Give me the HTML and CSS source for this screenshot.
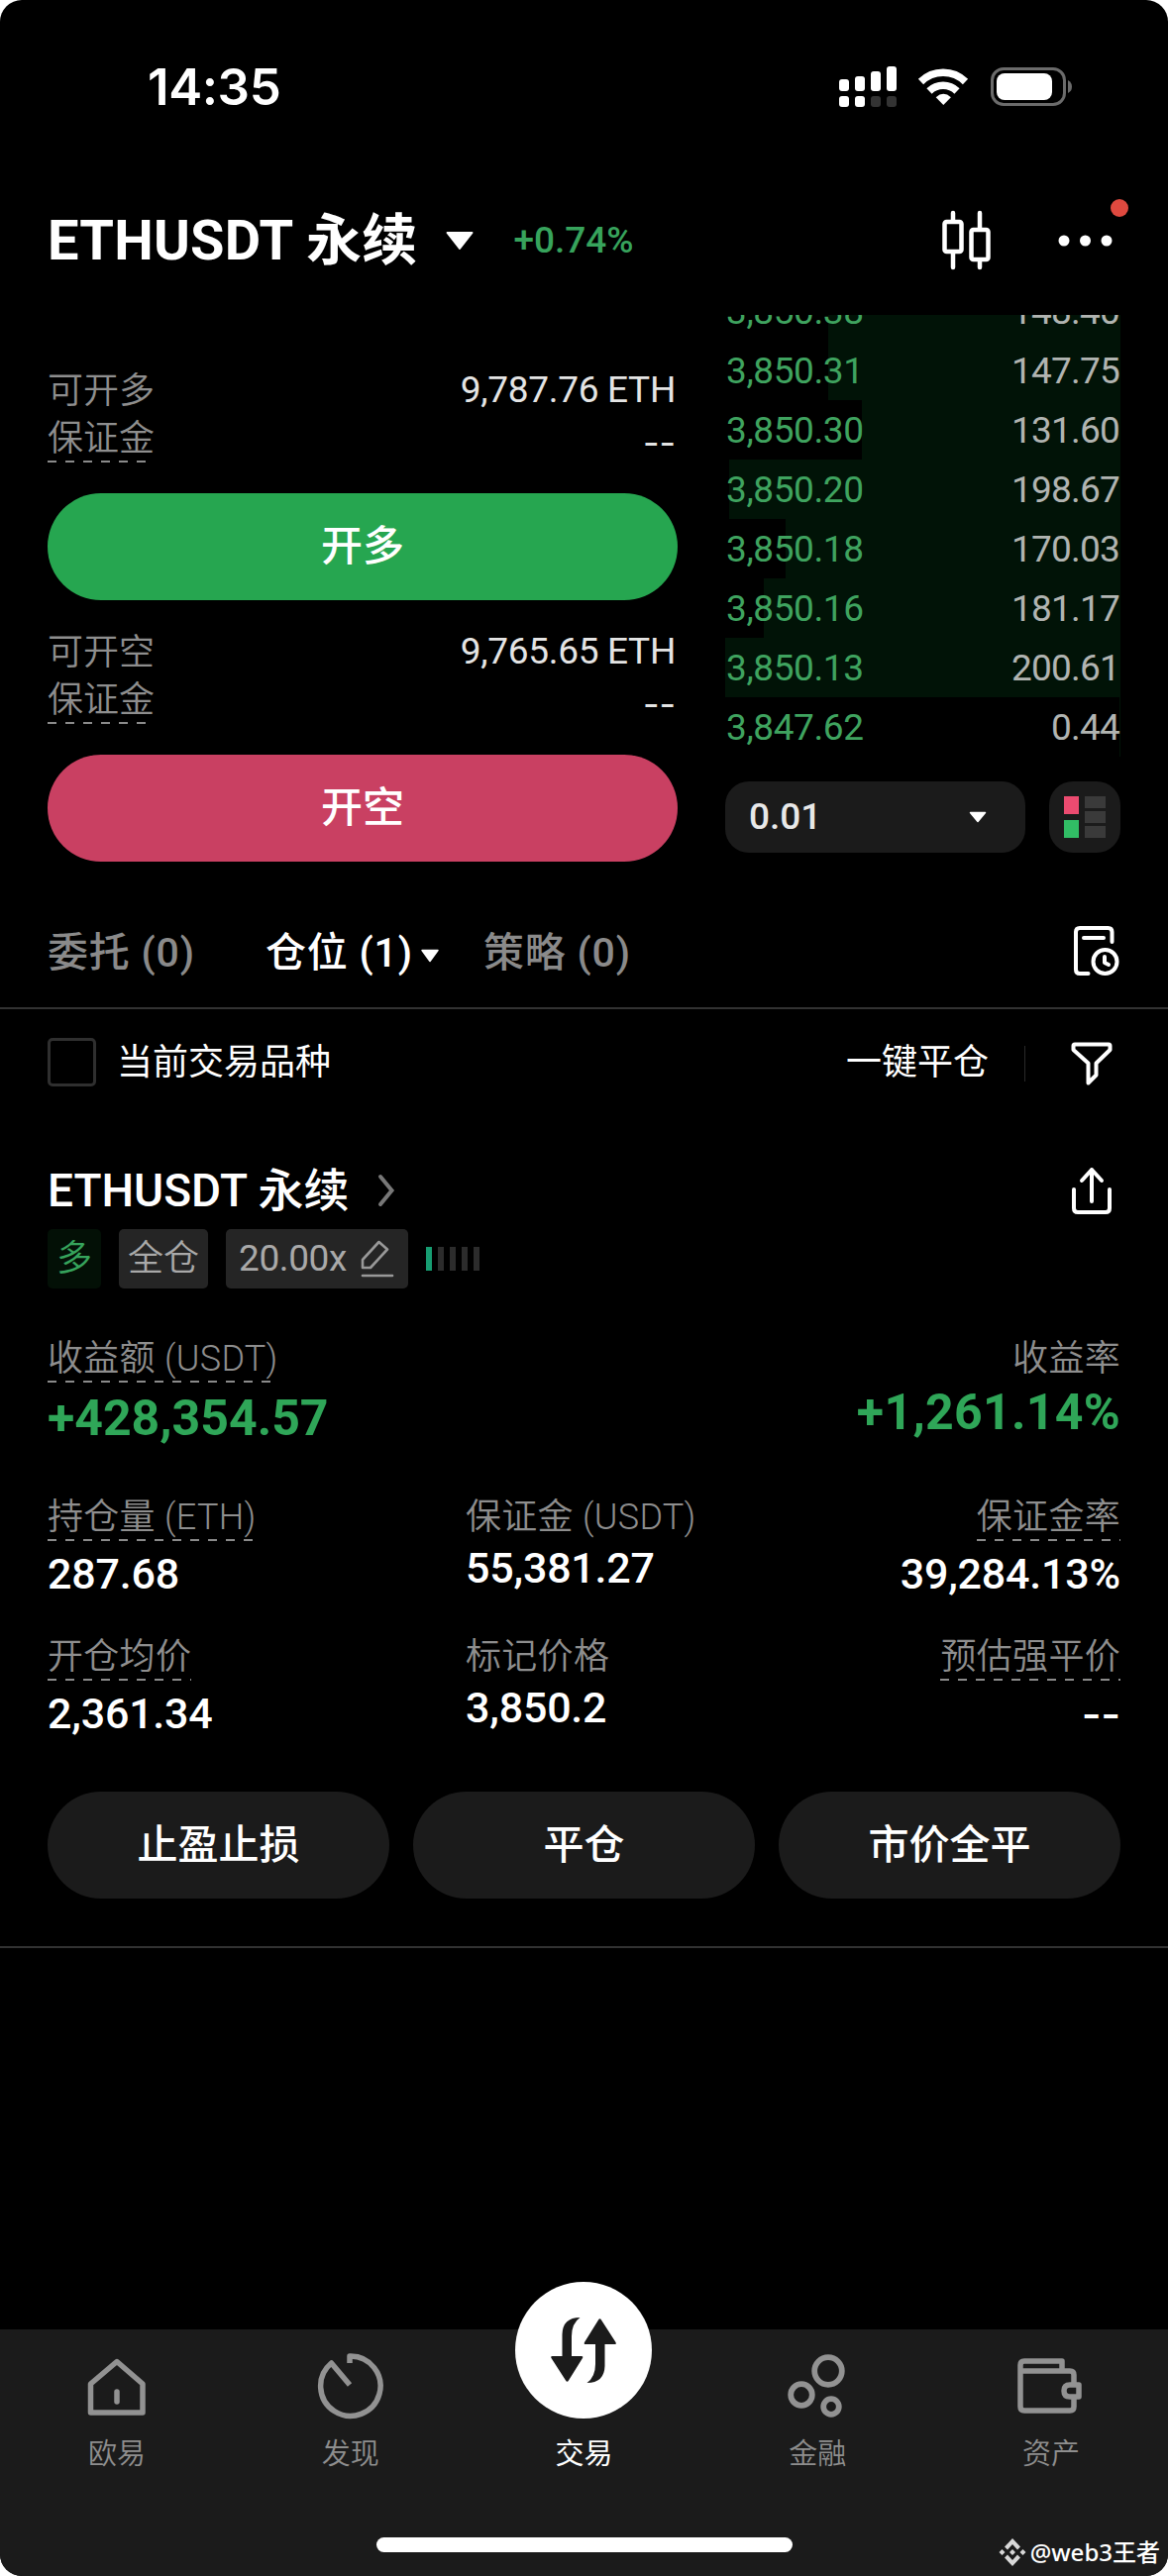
FILE: index.html
```html
<!DOCTYPE html>
<html lang="zh-CN">

<head>
    <meta charset="UTF-8">
    <title>ETHUSDT 永续</title>
    <link rel="stylesheet" href="styles.css">
</head>

<body>
    <div class="phone">
        <div class="status">
            <span class="time">14:35</span>
            <svg class="status-icons" width="240" height="48" viewBox="0 0 240 48" fill="#fff">
                <rect x="5" y="17" width="10" height="12" rx="3"/>
                <rect x="21" y="14" width="10" height="15" rx="3"/>
                <rect x="37" y="9" width="10" height="20" rx="3"/>
                <rect x="53" y="4" width="10" height="25" rx="3"/>
                <rect x="5" y="34" width="10" height="11" rx="3"/>
                <rect x="21" y="34" width="10" height="11" rx="3"/>
                <rect x="37" y="34" width="10" height="11" rx="3" fill="#333"/>
                <rect x="53" y="34" width="10" height="11" rx="3" fill="#333"/>
                <g fill="none" stroke="#fff" stroke-width="7.5">
                    <path d="M87.500 19.500A32 32 0 0 1 132.500 19.500"/>
                    <path d="M96 29A20 20 0 0 1 124 29"/>
                </g>
                <path d="M110.300 43L102.700 35.200Q110.300 28.500 117.900 35.200Z"/>
                <rect x="159.500" y="6.500" width="73" height="36" rx="11.500" fill="none" stroke="#6b6b6b" stroke-width="3"/>
                <rect x="164" y="11" width="56" height="27" rx="8"/>
                <path d="M236 18Q240 20 240 24.500Q240 29 236 31Z" fill="#6b6b6b"/>
            </svg>
        </div>

        <div class="header">
            <h1>ETHUSDT 永续</h1>
            <svg class="caret" width="30" height="19" viewBox="0 0 30 19"><path d="M2.500 1H27.500L15 17Z" fill="#fff" stroke="#fff" stroke-width="2" stroke-linejoin="round"/></svg>
            <span class="change">+0.74%</span>
            <svg class="candles" width="52" height="62" viewBox="0 0 52 62" fill="none" stroke="#fff" stroke-width="4.500" stroke-linecap="round">
                <rect x="4.500" y="12" width="17" height="30" rx="2"/>
                <path d="M13 3V11M13 43V58"/>
                <rect x="31.500" y="20" width="17" height="30" rx="2"/>
                <path d="M40 3V19M40 51V58"/>
            </svg>
            <div class="more">
                <svg width="56" height="12" viewBox="0 0 56 12" fill="#fff"><circle cx="6" cy="6" r="5.500"/><circle cx="27.500" cy="6" r="5.500"/><circle cx="49" cy="6" r="5.500"/></svg>
                <i class="red-dot"></i>
            </div>
        </div>

        <div class="trade">
            <div class="order">
                <div class="line"><span class="label">可开多</span><span class="num">9,787.76 ETH</span></div>
                <div class="line"><span class="label dashed">保证金</span><span class="none">--</span></div>
                <button class="btn-long">开多</button>
                <div class="line second"><span class="label">可开空</span><span class="num">9,765.65 ETH</span></div>
                <div class="line"><span class="label dashed">保证金</span><span class="none">--</span></div>
                <button class="btn-short">开空</button>
            </div>

            <div class="book">
                <ul class="bids">
                    <li style="--depth:295px"><b>3,850.38</b><span>148.40</span></li>
                    <li style="--depth:295px"><b>3,850.31</b><span>147.75</span></li>
                    <li style="--depth:261px"><b>3,850.30</b><span>131.60</span></li>
                    <li style="--depth:395px"><b>3,850.20</b><span>198.67</span></li>
                    <li style="--depth:338px"><b>3,850.18</b><span>170.03</span></li>
                    <li style="--depth:360px"><b>3,850.16</b><span>181.17</span></li>
                    <li style="--depth:399px"><b>3,850.13</b><span>200.61</span></li>
                    <li style="--depth:1px"><b>3,847.62</b><span>0.44</span></li>
                </ul>
                <div class="book-tools">
                    <div class="step">
                        <span>0.01</span>
                        <svg width="18" height="12" viewBox="0 0 18 12"><path d="M1.500 1.500H16.500L9 10.500Z" fill="#fff" stroke="#fff" stroke-width="1.500" stroke-linejoin="round"/></svg>
                    </div>
                    <div class="mode">
                        <svg width="42" height="42" viewBox="0 0 42 42">
                            <rect width="15" height="18" fill="#ec4b70"/>
                            <rect y="24" width="15" height="18" fill="#31bd65"/>
                            <path d="M21 0H42V12H21ZM21 15H42V27H21ZM21 30H42V42H21Z" fill="#3a3a3a"/>
                        </svg>
                    </div>
                </div>
            </div>
        </div>

        <div class="tabs">
            <span class="tab">委托 (0)</span>
            <span class="tab active">仓位 (1)<svg width="20" height="14" viewBox="0 0 20 14"><path d="M2 1.500H18L10 12.500Z" fill="#fff" stroke="#fff" stroke-width="1.500" stroke-linejoin="round"/></svg></span>
            <span class="tab">策略 (0)</span>
            <svg class="history" width="48" height="54" viewBox="0 0 48 54" fill="none" stroke="#fff" stroke-width="4" stroke-linecap="round" stroke-linejoin="round">
                <path d="M39.500 16V6Q39.500 2 35.500 2H7Q3 2 3 6V44Q3 48 7 48H15.500"/>
                <path d="M11 12H31"/>
                <circle cx="32.500" cy="36" r="12"/>
                <path d="M32 31V37L36 39"/>
            </svg>
        </div>

        <div class="filter">
            <span class="checkbox"></span>
            <span>当前交易品种</span>
            <span class="close-all">一键平仓</span>
            <svg class="funnel" width="42" height="44" viewBox="0 0 42 44" fill="none" stroke="#fff" stroke-width="4" stroke-linejoin="round">
                <path d="M4 2.500H38Q39.500 2.500 39.500 4V8L25.500 21.500V33.500L17.500 41.500V21.500L2.500 8V4Q2.500 2.500 4 2.500Z"/>
            </svg>
        </div>

        <div class="position">
            <div class="pos-head">
                <h2>ETHUSDT 永续</h2>
                <svg width="20" height="36" viewBox="0 0 20 36" fill="none" stroke="#777" stroke-width="4" stroke-linecap="round"><path d="M4 4L15.500 18L4 32"/></svg>
                <svg class="share" width="42" height="50" viewBox="0 0 42 50" fill="none" stroke="#fff" stroke-width="4" stroke-linecap="round" stroke-linejoin="round">
                    <path d="M3 24V43Q3 47 7 47H35Q39 47 39 43V24"/>
                    <path d="M21 36V4M11 15L21 4L31 15"/>
                </svg>
            </div>

            <div class="badges">
                <span class="badge long">多</span>
                <span class="badge">全仓</span>
                <span class="badge lever">20.00x
                    <svg width="34" height="38" viewBox="0 0 34 38" fill="none" stroke="#999" stroke-width="2.600" stroke-linejoin="round" stroke-linecap="round">
                        <path d="M2 28V20L18.500 2L27 9.500L10 28Z"/>
                        <path d="M2 36H32"/>
                    </svg>
                </span>
                <span class="risk"><i class="on"></i><i></i><i></i><i></i><i></i></span>
            </div>

            <div class="pnl">
                <div>
                    <span class="label dashed">收益额 (USDT)</span>
                    <strong>+428,354.57</strong>
                </div>
                <div class="right">
                    <span class="label">收益率</span>
                    <strong class="rate">+1,261.14%</strong>
                </div>
            </div>

            <div class="stats">
                <div>
                    <span class="label dashed">持仓量 (ETH)</span>
                    <em>287.68</em>
                </div>
                <div>
                    <span class="label">保证金 (USDT)</span>
                    <em>55,381.27</em>
                </div>
                <div class="right">
                    <span class="label dashed">保证金率</span>
                    <em>39,284.13%</em>
                </div>
                <div>
                    <span class="label dashed">开仓均价</span>
                    <em>2,361.34</em>
                </div>
                <div>
                    <span class="label">标记价格</span>
                    <em>3,850.2</em>
                </div>
                <div class="right">
                    <span class="label dashed">预估强平价</span>
                    <em class="none">--</em>
                </div>
            </div>

            <div class="actions">
                <button>止盈止损</button>
                <button>平仓</button>
                <button>市价全平</button>
            </div>
        </div>

        <div class="nav">
            <div class="nav-items">
                <div class="nav-item">
                    <svg width="72" height="72" viewBox="0 0 72 72" fill="none" stroke="#929292" stroke-width="5.500" stroke-linejoin="round" stroke-linecap="round">
                        <path d="M9.500 62V33L36 10.500L62 33V62Z"/>
                        <path d="M36 41V51"/>
                    </svg>
                    <span>欧易</span>
                </div>
                <div class="nav-item">
                    <svg width="72" height="72" viewBox="0 0 72 72" fill="none" stroke="#929292" stroke-width="5.500">
                        <path d="M35 12V5A30.200 30.200 0 1 1 16.500 12L35 34" stroke-linejoin="round"/>
                    </svg>
                    <span>发现</span>
                </div>
                <div class="nav-item current">
                    <div class="trade-btn">
                        <svg width="68" height="68" viewBox="0 0 68 68" fill="#1b1b1b">
                            <path d="M30.500 1Q22 7 22 20V40H32Q34 40 33 42L19 64.500Q17.500 67 16 64.500L1.500 42Q0.500 40 2.500 40H12.500V18Q13 1 30.500 1Z"/>
                            <path d="M37.500 67Q46 61 46 48V28H36Q34 28 35 26L49 3.500Q50.500 1 52 3.500L66.500 26Q67.500 28 65.500 28H55.500V50Q55 67 37.500 67Z"/>
                        </svg>
                    </div>
                    <span>交易</span>
                </div>
                <div class="nav-item">
                    <svg width="72" height="72" viewBox="0 0 72 72" fill="none" stroke="#929292" stroke-width="5.800">
                        <circle cx="47" cy="20" r="13.800"/>
                        <circle cx="20" cy="44" r="10.800"/>
                        <circle cx="50" cy="56" r="7.800"/>
                    </svg>
                    <span>金融</span>
                </div>
                <div class="nav-item">
                    <svg width="72" height="72" viewBox="0 0 72 72" fill="none" stroke="#929292" stroke-width="5.500" stroke-linejoin="round">
                        <path d="M47 19V10H9Q5 10 5 14V56Q5 60 9 60H55Q59 60 59 56V24Q59 20 55 20H6"/>
                        <path d="M64 34H55Q49 34 49 40Q49 46 55 46H64Z" fill="#1b1b1b"/>
                    </svg>
                    <span>资产</span>
                </div>
            </div>
            <div class="home-bar"></div>
        </div>

        <div class="watermark">
            <svg width="28" height="30" viewBox="0 0 28 30" fill="#d8d8d8">
                <path d="M14 1L22 9.500L19 12.500L14 7L9 12.500L6 9.500ZM14 29L22 20.500L19 17.500L14 23L9 17.500L6 20.500ZM3.500 12L6.500 15L3.500 18L0.500 15ZM24.500 12L27.500 15L24.500 18L21.500 15ZM14 12L17 15L14 18L11 15Z"/>
            </svg>
            <span>@web3王者</span>
        </div>
    </div>
</body>

</html>
```
FILE: styles.css
```css
* {
    box-sizing: border-box;
    margin: 0;
    padding: 0;
}

body {
    background-color: #fff;
    font-family: Roboto, "Noto Sans CJK SC", sans-serif;
    font-size: 36px;
    line-height: 48px;
    color: #fff;
}

.phone {
    position: relative;
    display: flex;
    flex-direction: column;
    height: 2601px;
    background-color: #000;
    border-radius: 22px;
    overflow: hidden;
}

svg {
    display: block;
    flex: none;
}

button {
    border: none;
    color: #fff;
    font-family: inherit;
    font-size: 42px;
    font-weight: 500;
    line-height: 60px;
}

.status {
    display: flex;
    justify-content: space-between;
    padding: 63px 97px 0 149px;
    height: 183px;
}

.time {
    font-family: Inter, sans-serif;
    font-size: 51px;
    font-weight: 600;
    line-height: 50px;
    letter-spacing: -0.4px;
}

.header {
    display: flex;
    align-items: center;
    height: 120px;
    margin-bottom: 15px;
    padding: 0 48px;
}

h1 {
    font-size: 56px;
    font-weight: 700;
    line-height: 80px;
    letter-spacing: 0.2px;
    white-space: nowrap;
}

.caret {
    margin-left: 28px;
}

.change {
    margin-left: 39px;
    font-size: 37px;
    font-weight: 500;
    color: #37a35c;
}

.candles {
    margin-left: auto;
}

.more {
    position: relative;
    margin-left: 67px;
    margin-right: 7px;
}

.red-dot {
    position: absolute;
    right: -15px;
    top: -36px;
    width: 18px;
    height: 18px;
    border-radius: 50%;
    background-color: #df493f;
}

.trade {
    display: grid;
    grid-template-columns: 636px 399px;
    column-gap: 48px;
    padding: 0 48px;
}

.order {
    padding-top: 53px;
}

.line {
    display: flex;
    justify-content: space-between;
    align-items: flex-start;
    height: 48px;
    padding-right: 2px;
    color: #e4e4e4;
}

.line.second {
    margin-top: 29px;
}

.label {
    display: block;
    width: fit-content;
    font-weight: 350;
    color: #8e8e8e;
    white-space: nowrap;
}

.pnl .label,
.stats .label {
    letter-spacing: 0.3px;
}

.dashed {
    background: repeating-linear-gradient(90deg, #8a8a8a 0 9px, transparent 9px 18px) left bottom / 100% 2px no-repeat;
}

.num {
    font-size: 37px;
    line-height: 46px;
    letter-spacing: -0.3px;
}

.none {
    font-family: Inter, sans-serif;
}

.line .none {
    line-height: 56px;
}

.btn-long,
.btn-short {
    display: block;
    width: 100%;
    height: 108px;
    margin-top: 31px;
    border-radius: 54px;
    background-color: #26a650;
}

.btn-short {
    background-color: #c94062;
}

.bids {
    display: flex;
    flex-direction: column;
    justify-content: flex-end;
    height: 446px;
    overflow: hidden;
    list-style-type: none;
}

.bids li {
    flex: none;
    display: flex;
    justify-content: space-between;
    height: 60px;
    padding: 0 1px 0 1px;
    font-size: 37px;
    line-height: 61px;
    letter-spacing: -0.4px;
    background: linear-gradient(#011307, #011307) right / var(--depth) 100% no-repeat;
}

.bids b {
    font-weight: 400;
    color: #3fa35f;
}

.bids span {
    color: #b1b4b1;
    letter-spacing: -0.8px;
}

.book-tools {
    display: flex;
    justify-content: space-between;
    margin-top: 25px;
}

.step {
    display: flex;
    justify-content: space-between;
    align-items: center;
    width: 303px;
    height: 72px;
    padding: 0 39px 0 24px;
    border-radius: 24px;
    background-color: #1b1b1b;
    font-size: 37px;
    font-weight: 500;
    color: #e8e8e8;
}

.mode {
    display: flex;
    justify-content: center;
    align-items: center;
    width: 72px;
    height: 72px;
    border-radius: 24px;
    background-color: #1b1b1b;
}

.tabs {
    display: flex;
    align-items: center;
    height: 149px;
    padding: 37px 48px 0;
    border-bottom: 2px solid #323232;
    font-size: 41px;
    font-weight: 500;
    letter-spacing: 0.8px;
}

.tab {
    display: flex;
    align-items: center;
    width: 220px;
    color: #8a8a8a;
    white-space: nowrap;
}

.tab.active {
    color: #fff;
}

.tab svg {
    margin: 5px 0 0 7px;
}

.history {
    margin-left: auto;
}

.filter {
    display: flex;
    align-items: center;
    height: 107px;
    padding: 0 56px 0 48px;
}

.checkbox {
    width: 49px;
    height: 49px;
    margin-right: 21px;
    border: 3px solid #2f2f2f;
    border-radius: 5px;
}

.close-all {
    position: relative;
    height: 48px;
    margin-left: auto;
    margin-right: 46px;
    padding-right: 37px;
}

.close-all::after {
    content: "";
    position: absolute;
    top: 7px;
    right: 0;
    width: 1px;
    height: 36px;
    background-color: #2a2a2a;
}

.funnel {
    margin-top: 3px;
}

.position {
    padding: 46px 48px 48px;
    border-bottom: 2px solid #323232;
}

.pos-head {
    display: flex;
    align-items: center;
    height: 60px;
}

h2 {
    margin-right: 28px;
    font-size: 46px;
    font-weight: 500;
    line-height: 60px;
}

.share {
    margin-left: auto;
    margin-right: 8px;
}

.badges {
    display: flex;
    align-items: center;
    margin-top: 9px;
}

.badge {
    display: flex;
    align-items: center;
    height: 60px;
    margin-right: 18px;
    padding: 0 9px;
    border-radius: 5px;
    background-color: #252525;
    color: #a9a9a9;
    font-weight: 350;
}

.badge.long {
    background-color: #031006;
    color: #36a35c;
}

.badge.lever {
    padding: 0 14px 0 13px;
    font-size: 37px;
    font-weight: 400;
    letter-spacing: -0.4px;
}

.badge.lever svg {
    margin-left: 14px;
}

.risk {
    display: flex;
    gap: 6px;
}

.risk i {
    width: 6px;
    height: 24px;
    background-color: #2c2c2c;
}

.risk .on {
    background-color: #179d72;
}

.pnl {
    display: flex;
    justify-content: space-between;
    height: 114px;
    margin-top: 47px;
}

.right {
    display: flex;
    flex-direction: column;
    align-items: flex-end;
}

strong {
    display: block;
    font-size: 50px;
    font-weight: 700;
    line-height: 60px;
    color: #2fa658;
}

strong.rate {
    letter-spacing: 0.3px;
}

.dashed + strong,
.dashed + em {
    margin-top: 6px;
}

.stats {
    display: grid;
    grid-template-columns: 422px 300px 1fr;
    row-gap: 33px;
    margin-top: 46px;
}

em {
    display: block;
    font-size: 43px;
    font-style: normal;
    font-weight: 500;
    line-height: 54px;
    letter-spacing: -0.2px;
}

.actions {
    display: grid;
    grid-template-columns: repeat(3, 1fr);
    gap: 24px;
    margin-top: 52px;
}

.actions button {
    height: 108px;
    border-radius: 54px;
    background-color: #1b1b1b;
    font-size: 41px;
}

.nav {
    height: 249px;
    margin-top: auto;
    background-color: #1b1b1b;
}

.nav-items {
    display: grid;
    grid-template-columns: repeat(5, 1fr);
    height: 210px;
    padding-top: 22px;
}

.nav-item {
    display: flex;
    flex-direction: column;
    align-items: center;
    gap: 12px;
    font-size: 29px;
    font-weight: 350;
    line-height: 40px;
    color: #8e8e8e;
}

.nav-item.current {
    color: #fff;
    font-weight: 400;
}

.trade-btn {
    display: flex;
    justify-content: center;
    align-items: center;
    width: 138px;
    height: 138px;
    margin-top: -70px;
    margin-bottom: 4px;
    border-radius: 50%;
    background-color: #fff;
}

.home-bar {
    width: 420px;
    height: 15px;
    margin: 0 auto;
    border-radius: 8px;
    background-color: #fff;
}

.watermark {
    position: absolute;
    right: 8px;
    bottom: 8px;
    display: flex;
    align-items: center;
    gap: 4px;
    font-family: "Noto Sans", "Noto Sans CJK SC", sans-serif;
    font-size: 24px;
    font-weight: 500;
    line-height: 32px;
}
```
